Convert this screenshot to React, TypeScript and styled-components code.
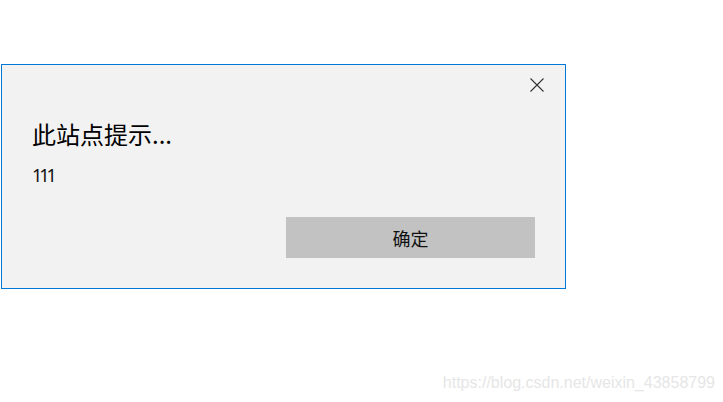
import styled, { createGlobalStyle } from "styled-components";

const GlobalStyle = createGlobalStyle`
  html, body {
    margin: 0;
    padding: 0;
    background: #ffffff;
  }
  body {
    font-family: "Noto Sans", "Noto Sans CJK SC", sans-serif;
  }
`;

const Page = styled.div`
  position: relative;
  width: 723px;
  height: 402px;
  padding: 64px 0 0 1px;
  box-sizing: border-box;
  overflow: hidden;
`;

const Dialog = styled.div`
  width: 565px;
  height: 225px;
  box-sizing: border-box;
  border: 1px solid #0078d7;
  background: #f2f2f2;
  display: flex;
  flex-direction: column;
`;

const TopBar = styled.div`
  display: flex;
  justify-content: flex-end;
  padding: 5px 13px 0 0;
`;

const CloseBtn = styled.button`
  width: 30px;
  height: 30px;
  padding: 0;
  border: none;
  background: transparent;
  display: flex;
  align-items: center;
  justify-content: center;
  cursor: pointer;
`;

const Body = styled.div`
  display: flex;
  flex-direction: column;
  padding: 0 30px;
`;

const Title = styled.h1`
  margin: 18px 0 0;
  font-family: "Noto Sans CJK SC", "Noto Sans", sans-serif;
  font-weight: 400;
  font-size: 24px;
  line-height: 32px;
  color: #000;
`;

const Message = styled.p`
  margin: 13px 0 0;
  font-family: "Noto Sans", "Noto Sans CJK SC", sans-serif;
  font-size: 18px;
  line-height: 24px;
  letter-spacing: -3px;
  color: #111;
`;

const Actions = styled.div`
  display: flex;
  justify-content: flex-end;
  margin-top: 30px;
`;

const OkButton = styled.button`
  width: 249px;
  height: 41px;
  border: none;
  background: #c2c2c2;
  font-family: "Noto Sans CJK SC", sans-serif;
  font-size: 18px;
  color: #111;
  padding: 0;
  cursor: pointer;
`;

const Watermark = styled.span`
  position: absolute;
  right: 8px;
  bottom: 11px;
  font-family: "Liberation Sans", Arial, sans-serif;
  font-size: 16px;
  line-height: 16px;
  color: #e6e6e6;
`;

const CloseIcon = () => (
  <svg width="14" height="14" viewBox="0 0 14 14">
    <path d="M0.5 0.5 L13.5 13.5 M13.5 0.5 L0.5 13.5" stroke="#333" strokeWidth="1.1" fill="none" />
  </svg>
);

export default function App() {
  return (
    <Page>
      <GlobalStyle />
      <Dialog>
        <TopBar>
          <CloseBtn aria-label="关闭">
            <CloseIcon />
          </CloseBtn>
        </TopBar>
        <Body>
          <Title>此站点提示...</Title>
          <Message>111</Message>
          <Actions>
            <OkButton>确定</OkButton>
          </Actions>
        </Body>
      </Dialog>
      <Watermark>https://blog.csdn.net/weixin_43858799</Watermark>
    </Page>
  );
}
